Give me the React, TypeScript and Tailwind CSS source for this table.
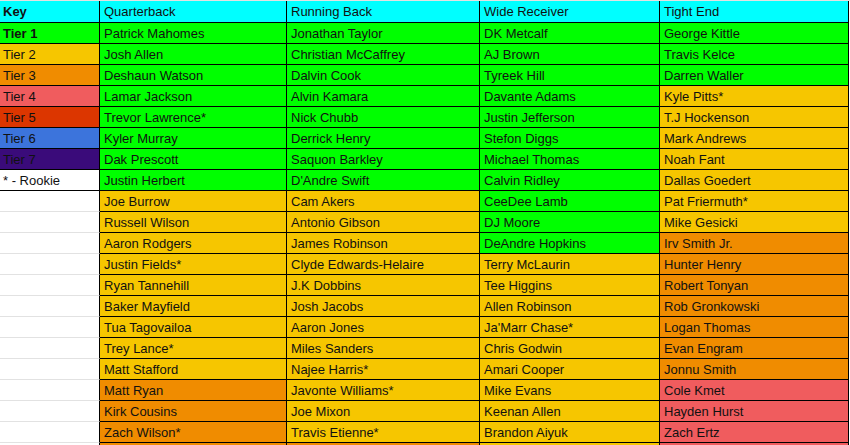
const C = {
  G: "bg-[#00ff00]",
  Y: "bg-[#f6c600]",
  O: "bg-[#f08c00]",
  P: "bg-[#f05c5e]",
  R: "bg-[#dc3600]",
  B: "bg-[#3c74dc]",
  V: "bg-[#3a0b7a]",
  W: "bg-white",
} as const;

type Tone = keyof typeof C;

interface Row {
  key: string;
  keyTone: Tone;
  cells: [string, Tone][];
}

const rows: Row[] = [
  { key: "Tier 1", keyTone: "G", cells: [["Patrick Mahomes", "G"], ["Jonathan Taylor", "G"], ["DK Metcalf", "G"], ["George Kittle", "G"]] },
  { key: "Tier 2", keyTone: "Y", cells: [["Josh Allen", "G"], ["Christian McCaffrey", "G"], ["AJ Brown", "G"], ["Travis Kelce", "G"]] },
  { key: "Tier 3", keyTone: "O", cells: [["Deshaun Watson", "G"], ["Dalvin Cook", "G"], ["Tyreek Hill", "G"], ["Darren Waller", "G"]] },
  { key: "Tier 4", keyTone: "P", cells: [["Lamar Jackson", "G"], ["Alvin Kamara", "G"], ["Davante Adams", "G"], ["Kyle Pitts*", "Y"]] },
  { key: "Tier 5", keyTone: "R", cells: [["Trevor Lawrence*", "G"], ["Nick Chubb", "G"], ["Justin Jefferson", "G"], ["T.J Hockenson", "Y"]] },
  { key: "Tier 6", keyTone: "B", cells: [["Kyler Murray", "G"], ["Derrick Henry", "G"], ["Stefon Diggs", "G"], ["Mark Andrews", "Y"]] },
  { key: "Tier 7", keyTone: "V", cells: [["Dak Prescott", "G"], ["Saquon Barkley", "G"], ["Michael Thomas", "G"], ["Noah Fant", "Y"]] },
  { key: "* - Rookie", keyTone: "W", cells: [["Justin Herbert", "G"], ["D'Andre Swift", "G"], ["Calvin Ridley", "G"], ["Dallas Goedert", "Y"]] },
  { key: "", keyTone: "W", cells: [["Joe Burrow", "Y"], ["Cam Akers", "Y"], ["CeeDee Lamb", "G"], ["Pat Friermuth*", "Y"]] },
  { key: "", keyTone: "W", cells: [["Russell Wilson", "Y"], ["Antonio Gibson", "Y"], ["DJ Moore", "G"], ["Mike Gesicki", "Y"]] },
  { key: "", keyTone: "W", cells: [["Aaron Rodgers", "Y"], ["James Robinson", "Y"], ["DeAndre Hopkins", "G"], ["Irv Smith Jr.", "O"]] },
  { key: "", keyTone: "W", cells: [["Justin Fields*", "Y"], ["Clyde Edwards-Helaire", "Y"], ["Terry McLaurin", "Y"], ["Hunter Henry", "O"]] },
  { key: "", keyTone: "W", cells: [["Ryan Tannehill", "Y"], ["J.K Dobbins", "Y"], ["Tee Higgins", "Y"], ["Robert Tonyan", "O"]] },
  { key: "", keyTone: "W", cells: [["Baker Mayfield", "Y"], ["Josh Jacobs", "Y"], ["Allen Robinson", "Y"], ["Rob Gronkowski", "O"]] },
  { key: "", keyTone: "W", cells: [["Tua Tagovailoa", "Y"], ["Aaron Jones", "Y"], ["Ja'Marr Chase*", "Y"], ["Logan Thomas", "O"]] },
  { key: "", keyTone: "W", cells: [["Trey Lance*", "Y"], ["Miles Sanders", "Y"], ["Chris Godwin", "Y"], ["Evan Engram", "O"]] },
  { key: "", keyTone: "W", cells: [["Matt Stafford", "Y"], ["Najee Harris*", "Y"], ["Amari Cooper", "Y"], ["Jonnu Smith", "O"]] },
  { key: "", keyTone: "W", cells: [["Matt Ryan", "O"], ["Javonte Williams*", "Y"], ["Mike Evans", "Y"], ["Cole Kmet", "P"]] },
  { key: "", keyTone: "W", cells: [["Kirk Cousins", "O"], ["Joe Mixon", "Y"], ["Keenan Allen", "Y"], ["Hayden Hurst", "P"]] },
  { key: "", keyTone: "W", cells: [["Zach Wilson*", "O"], ["Travis Etienne*", "Y"], ["Brandon Aiyuk", "Y"], ["Zach Ertz", "P"]] },
  { key: "", keyTone: "W", cells: [["", "O"], ["", "O"], ["", "Y"], ["", "P"]] },
];

const grid = "grid grid-cols-[100px_187px_193px_180px_189px]";
const cell = "flex h-[21px] items-center overflow-hidden whitespace-nowrap border-r border-b border-black pl-1 pt-px leading-5";

export default function App() {
  return (
    <div
      className="h-screen w-full overflow-hidden border-t border-[#e2e2e2] bg-white text-[13px] text-[#111]"
      style={{ fontFamily: '"Liberation Sans", Arial, sans-serif' }}
    >
      {/* Header */}
      <div className={grid}>
        <div className="flex h-[22px] items-center border-r border-b border-black bg-[#00ffff] pl-[3px] pt-px font-bold">Key</div>
        {["Quarterback", "Running Back", "Wide Receiver", "Tight End"].map((h) => (
          <div key={h} className={`${cell} h-[22px] bg-[#00ffff]`}>
            {h}
          </div>
        ))}
      </div>

      {rows.map((r, i) => {
        // key column goes back to plain sheet gridlines below the legend
        const blank = i >= 8;
        return (
          <div key={i} className={grid}>
            <div
              className={`flex h-[21px] items-center border-r border-b pl-[3px] pt-px leading-5 ${C[r.keyTone]} ${
                blank ? "border-b-[#e2e2e2] border-r-black" : "border-black"
              } ${i === 0 ? "font-bold" : ""}`}
            >
              {r.key}
            </div>
            {r.cells.map(([name, tone], j) => (
              <div key={j} className={`${cell} ${C[tone]}`}>
                {name}
              </div>
            ))}
          </div>
        );
      })}
    </div>
  );
}
